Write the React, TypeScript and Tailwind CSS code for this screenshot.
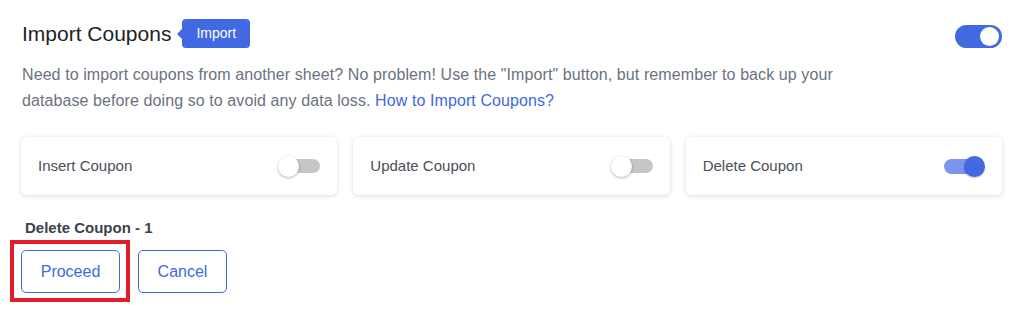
import React from "react";

function Toggle({ on }: { on: boolean }) {
  return on ? (
    <div className="relative w-[41px] h-[21px] flex items-center">
      <div className="absolute left-0 right-[2px] h-[15px] rounded-full bg-[#7b95ef]" />
      <div className="absolute right-0 w-[21px] h-[21px] rounded-full bg-[#4169e1] shadow-[0_1px_2px_rgba(0,0,0,0.25)]" />
    </div>
  ) : (
    <div className="relative w-[42px] h-[21px] flex items-center">
      <div className="absolute left-[4px] right-0 h-[14px] rounded-full bg-[#c6c6c6]" />
      <div className="absolute left-0 w-[21px] h-[21px] rounded-full bg-white shadow-[0_1px_3px_rgba(0,0,0,0.3)]" />
    </div>
  );
}

function Card({ label, on }: { label: string; on: boolean }) {
  return (
    <div className="h-[58px] rounded-[5px] bg-white shadow-[0_1px_4px_rgba(0,0,0,0.16)] flex items-center justify-between pl-[17px] pr-[17px]">
      <span className="text-[15px] text-[#4b4f58]">{label}</span>
      <Toggle on={on} />
    </div>
  );
}

export default function App() {
  return (
    <div
      className="w-[1024px] h-[315px] bg-white px-[22px] pt-[19px]"
      style={{ fontFamily: '"Liberation Sans", Arial, sans-serif' }}
    >
      <div className="flex items-center justify-between">
        <div className="flex items-center">
          <h2 className="text-[21px] text-[#1d2327] leading-[29px]">Import Coupons</h2>
          <div className="relative ml-[11px] h-[29px] px-[14px] rounded-[4px] bg-[#4169e1] text-white text-[14px] flex items-center">
            <span className="absolute -left-[5px] top-1/2 -translate-y-1/2 w-0 h-0 border-y-[6px] border-y-transparent border-r-[6px] border-r-[#4169e1]" />
            Import
          </div>
        </div>
        <div className="relative w-[47px] h-[23px] rounded-full bg-[#4169e1] mt-[6px]">
          <div className="absolute right-[3px] top-[2px] w-[19px] h-[19px] rounded-full bg-white" />
        </div>
      </div>

      <p className="mt-[14px] text-[16px] leading-[26px] tracking-[0.09px] text-[#6b7280] max-w-[840px]">
        Need to import coupons from another sheet? No problem! Use the "Import" button, but remember to back up your
        database before doing so to avoid any data loss.{" "}
        <a className="text-[#4169e1]" href="#">How to Import Coupons?</a>
      </p>

      <div className="mt-[23px] grid grid-cols-3 gap-[16px] -ml-[1px]">
        <Card label="Insert Coupon" on={false} />
        <Card label="Update Coupon" on={false} />
        <Card label="Delete Coupon" on={true} />
      </div>

      <div className="mt-[24px] ml-[3px] text-[15px] font-bold text-[#3c434a] leading-[18px]">Delete Coupon - 1</div>

      <div className="mt-[13px] -ml-[1px] flex gap-[18px]">
        <div className="relative">
          <button className="w-[99px] h-[43px] rounded-[5px] border border-[#4169e1] text-[#4169e1] text-[16px] bg-white">
            Proceed
          </button>
          <div className="absolute -left-[11px] -right-[10px] -top-[10px] -bottom-[9px] border-[4px] border-[#e11d2a] pointer-events-none" />
        </div>
        <button className="w-[89px] h-[43px] rounded-[5px] border border-[#4169e1] text-[#4169e1] text-[16px] bg-white">
          Cancel
        </button>
      </div>
    </div>
  );
}
